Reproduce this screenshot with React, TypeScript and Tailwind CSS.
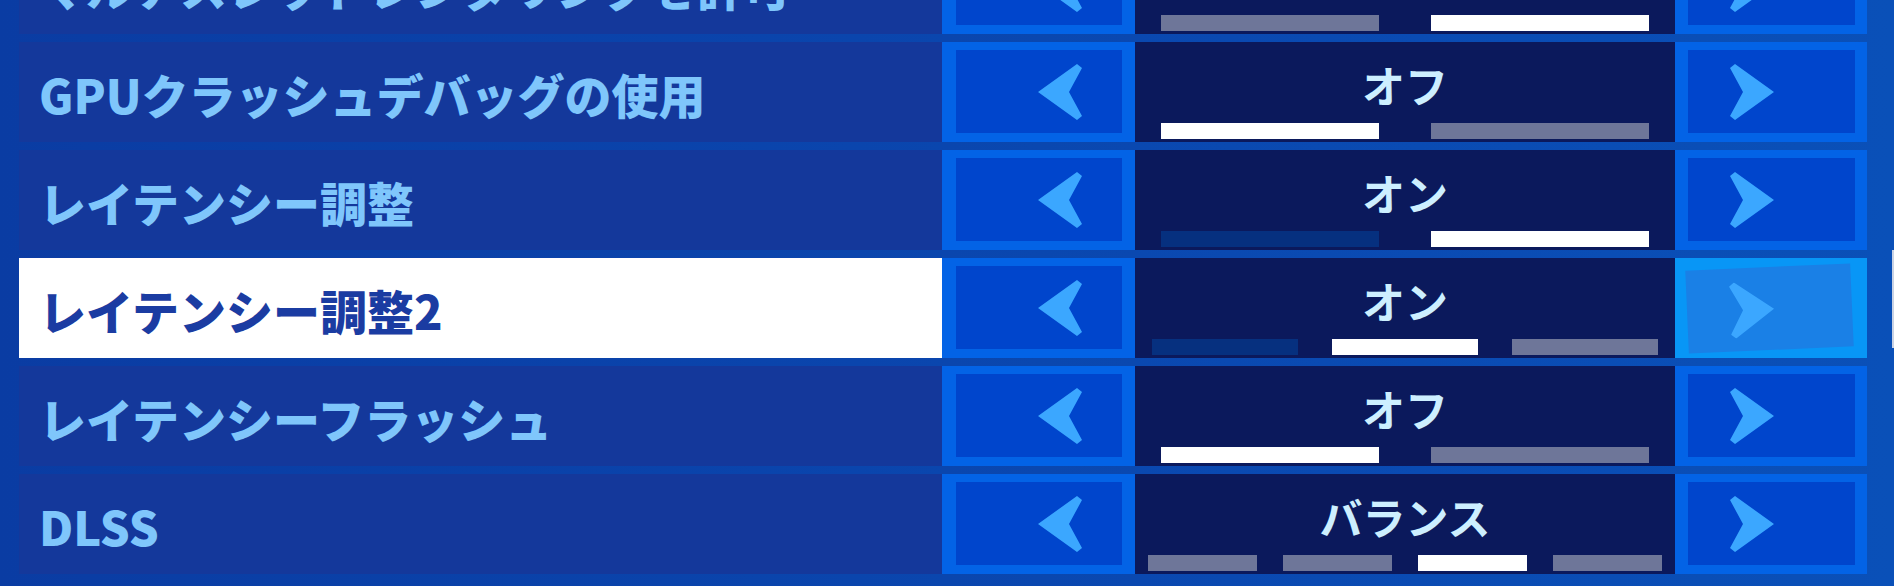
import React from "react";

type Bar = "on" | "off" | "dim";

interface Setting {
  label: string;
  value: string;
  bars: Bar[];
  selected?: boolean;
}

const settings: Setting[] = [
  { label: "マルチスレッドレンダリングを許可", value: "オン", bars: ["off", "on"] },
  { label: "GPUクラッシュデバッグの使用", value: "オフ", bars: ["on", "off"] },
  { label: "レイテンシー調整", value: "オン", bars: ["dim", "on"] },
  { label: "レイテンシー調整2", value: "オン", bars: ["dim", "on", "off"], selected: true },
  { label: "レイテンシーフラッシュ", value: "オフ", bars: ["on", "off"] },
  { label: "DLSS", value: "バランス", bars: ["off", "off", "on", "off"] },
];

const barColor: Record<Bar, string> = {
  on: "bg-white",
  off: "bg-[#6e7699]",
  dim: "bg-[#06307f]",
};

function LeftArrow() {
  return (
    <svg width="44" height="56" viewBox="0 0 44 56" className="block">
      <polygon points="0,28 39,0 44,4 31,28 44,52 39,56" fill="#3ba7ff" />
    </svg>
  );
}

function RightArrow() {
  return (
    <svg width="44" height="56" viewBox="0 0 44 56" className="block">
      <polygon points="44,28 5,0 0,4 13,28 0,52 5,56" fill="#3ba7ff" />
    </svg>
  );
}

function SettingRow({ s }: { s: Setting }) {
  return (
    <div className="flex h-[100px] shrink-0">
      <div
        className={
          s.selected
            ? "flex w-[923px] items-center bg-white pl-[20px] pt-[2px] text-[47px] font-black text-[#1b3ca2]"
            : "flex w-[923px] items-center bg-[#14389b] pl-[20px] pt-[2px] text-[47px] font-black text-[#7fc6fb]"
        }
      >
        <span className="whitespace-nowrap leading-none">{s.label}</span>
      </div>

      <div className="w-[193px] bg-[#0363e6] pb-[9px] pl-[14px] pr-[13px] pt-2">
        <div className="flex h-full items-center bg-[#0045cc] pl-[82px]">
          <LeftArrow />
        </div>
      </div>

      <div className="flex w-[540px] flex-col bg-[#0b195c]">
        <div className="flex h-[81px] items-center justify-center pt-[4px] text-[43px] font-semibold leading-none text-[#cdefff]">
          {s.value}
        </div>
        <div className="flex h-4">
          {s.bars.map((b, i) => (
            <div key={i} className="flex flex-1 justify-center">
              <div className={`h-full w-[81%] ${barColor[b]}`} />
            </div>
          ))}
        </div>
      </div>

      {s.selected ? (
        <div className="w-[192px] bg-[#0896f6] pb-2 pl-[12px] pr-[15px] pt-[9px]">
          <div className="flex h-full rotate-[-2.5deg] items-center bg-[#1a80e6] pl-[43px]">
            <RightArrow />
          </div>
        </div>
      ) : (
        <div className="w-[192px] bg-[#0363e6] pb-[9px] pl-[13px] pr-[12px] pt-2">
          <div className="flex h-full items-center bg-[#0045cc] pl-[42px]">
            <RightArrow />
          </div>
        </div>
      )}
    </div>
  );
}

export default function App() {
  return (
    <div className="relative h-[586px] w-[1894px] overflow-hidden bg-gradient-to-r from-[#0a3ca3] via-[#0a46ae] to-[#0a50b8] font-['Noto_Sans_CJK_JP','Noto_Sans',sans-serif]">
      <div className="mt-[-66px] flex flex-col gap-2 pl-[19px] pr-[27px]">
        {settings.map((s) => (
          <SettingRow key={s.label} s={s} />
        ))}
      </div>
      <div className="absolute left-[1892px] top-[250px] h-[98px] w-[2px] bg-[#c9d2e4]" />
    </div>
  );
}
